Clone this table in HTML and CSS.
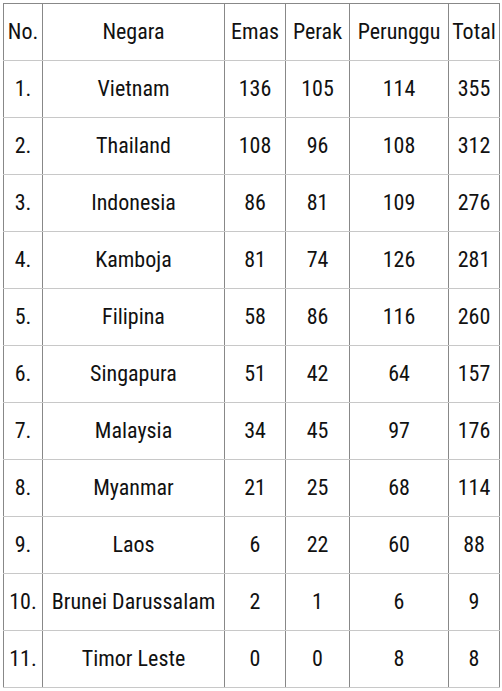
FILE: index.html
```html
<!DOCTYPE html>
<html>
<head>
<meta charset="utf-8">
<link rel="stylesheet" href="styles.css">
</head>
<body>
<table class="medals">
<colgroup>
<col class="c-no"><col class="c-country"><col class="c-gold"><col class="c-silver"><col class="c-bronze"><col class="c-total">
</colgroup>
<thead>
<tr><th>No.</th><th>Negara</th><th>Emas</th><th>Perak</th><th>Perunggu</th><th>Total</th></tr>
</thead>
<tbody>
<tr><td>1.</td><td>Vietnam</td><td>136</td><td>105</td><td>114</td><td>355</td></tr>
<tr><td>2.</td><td>Thailand</td><td>108</td><td>96</td><td>108</td><td>312</td></tr>
<tr><td>3.</td><td>Indonesia</td><td>86</td><td>81</td><td>109</td><td>276</td></tr>
<tr><td>4.</td><td>Kamboja</td><td>81</td><td>74</td><td>126</td><td>281</td></tr>
<tr><td>5.</td><td>Filipina</td><td>58</td><td>86</td><td>116</td><td>260</td></tr>
<tr><td>6.</td><td>Singapura</td><td>51</td><td>42</td><td>64</td><td>157</td></tr>
<tr><td>7.</td><td>Malaysia</td><td>34</td><td>45</td><td>97</td><td>176</td></tr>
<tr><td>8.</td><td>Myanmar</td><td>21</td><td>25</td><td>68</td><td>114</td></tr>
<tr><td>9.</td><td>Laos</td><td>6</td><td>22</td><td>60</td><td>88</td></tr>
<tr><td>10.</td><td>Brunei Darussalam</td><td>2</td><td>1</td><td>6</td><td>9</td></tr>
<tr><td>11.</td><td>Timor Leste</td><td>0</td><td>0</td><td>8</td><td>8</td></tr>
</tbody>
</table>
</body>
</html>
```
FILE: styles.css
```css
html, body {
  margin: 0;
  padding: 0;
  background: #fff;
}
body {
  padding: 3px;
}
.medals {
  border-collapse: collapse;
  table-layout: fixed;
  width: 497px;
  font-family: Roboto, "Noto Sans", sans-serif;
  font-stretch: condensed;
  font-size: 22px;
  color: #111;
  border-top: 1px solid #888;
}
.c-no { width: 39px; }
.c-country { width: 182px; }
.c-gold { width: 61px; }
.c-silver { width: 64px; }
.c-bronze { width: 99px; }
.c-total { width: 51px; }
.medals th,
.medals td {
  height: 55px;
  padding: 0 0 1px 0;
  text-align: center;
  vertical-align: middle;
  font-weight: normal;
  white-space: nowrap;
  border-left: 1px solid #888;
  border-right: 1px solid #888;
  border-bottom: 1px solid #c8c8c8;
}
.medals th {
  border-top: 1px solid #888;
}
```
